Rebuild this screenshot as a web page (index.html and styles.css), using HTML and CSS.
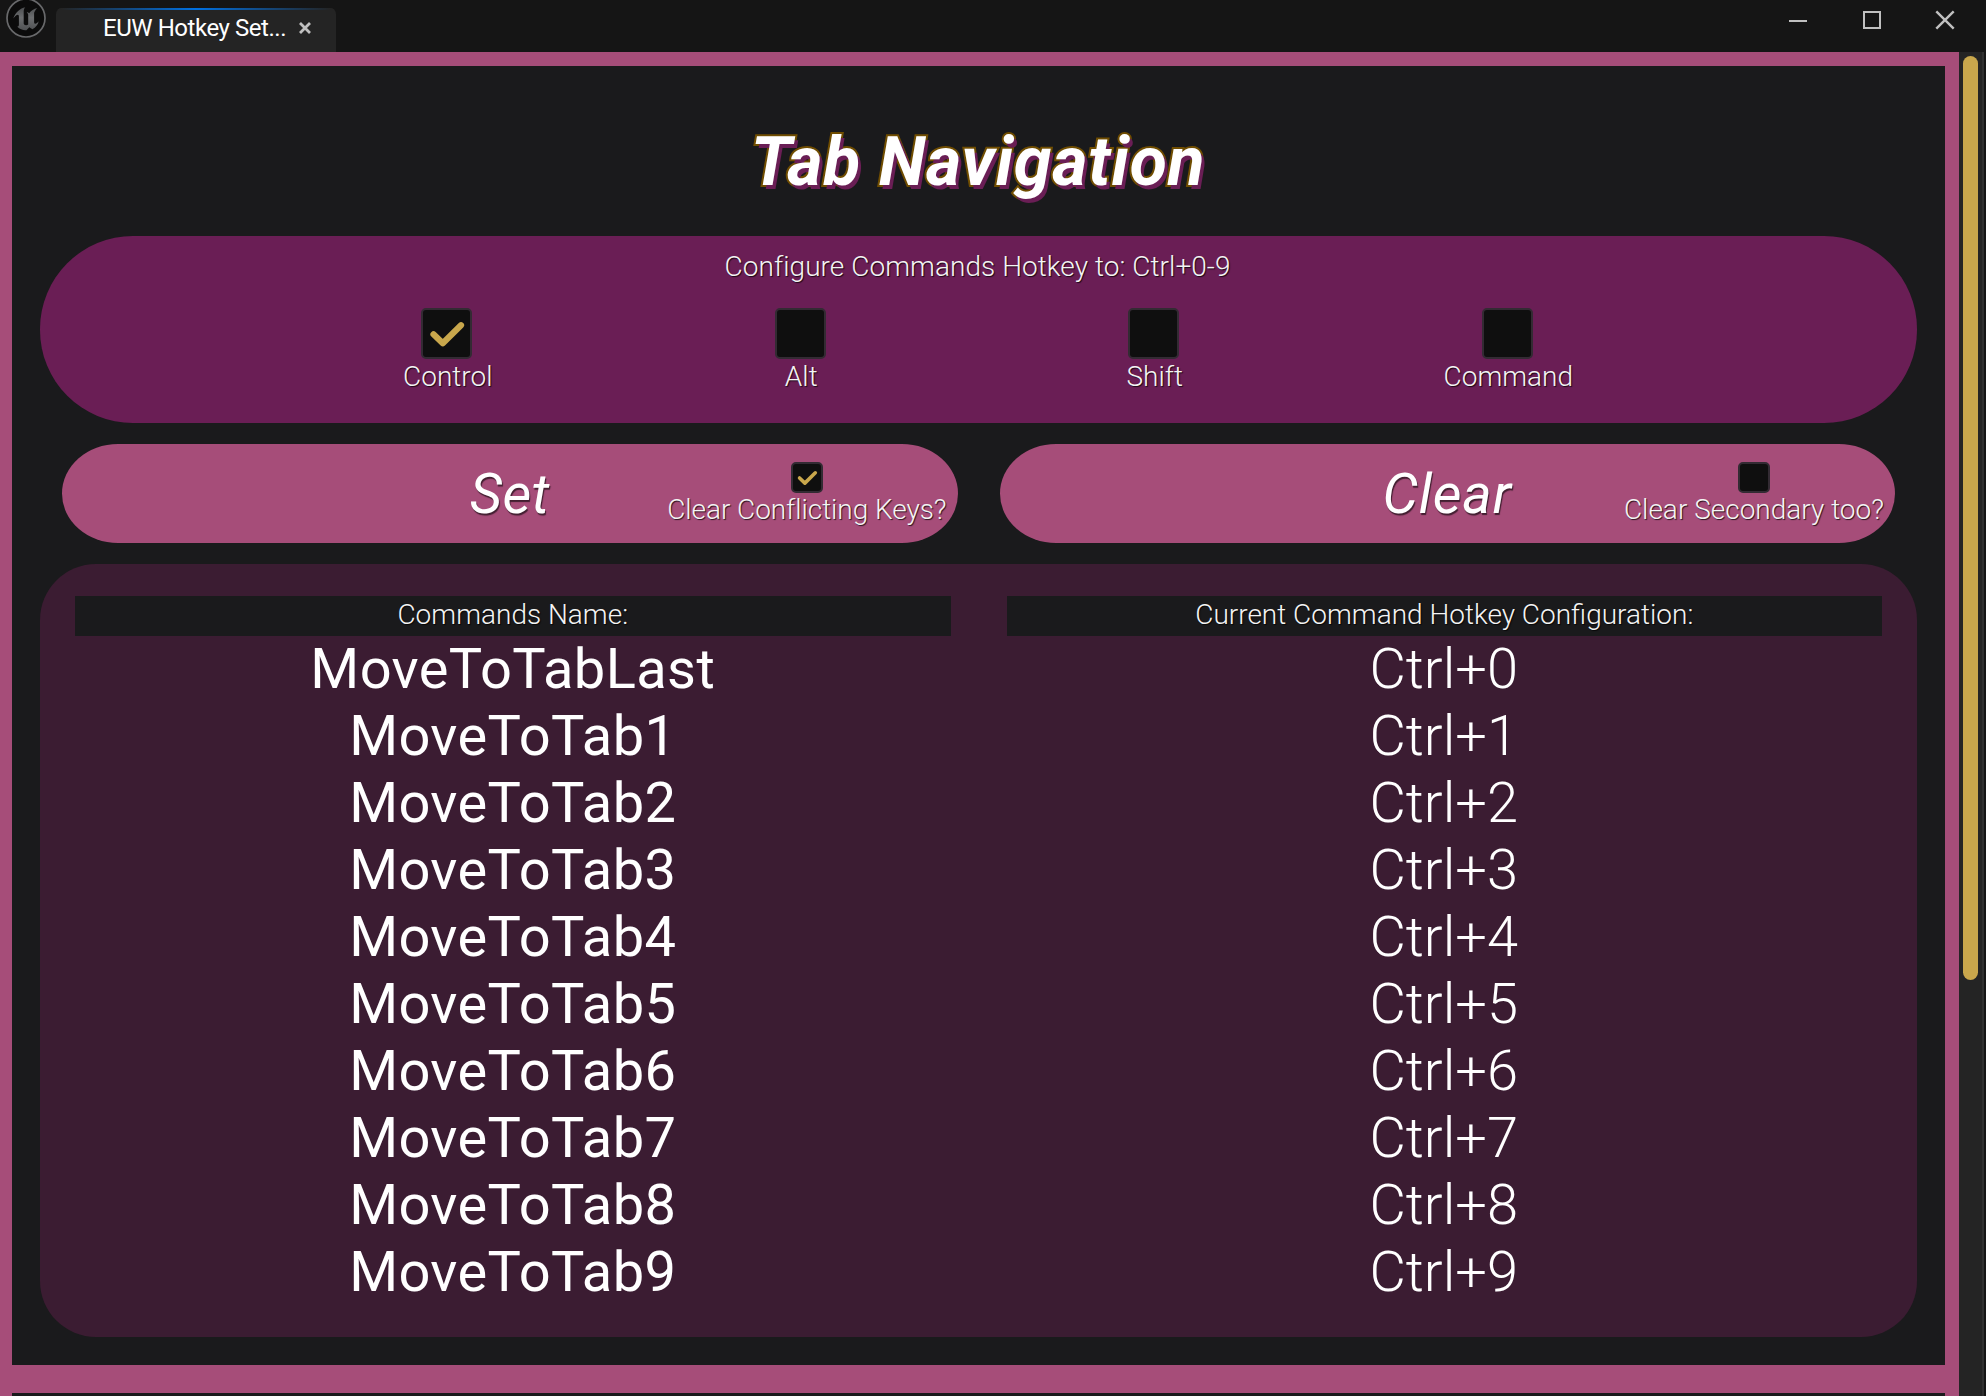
FILE: index.html
```html
<!DOCTYPE html>
<html lang="en">
<head>
<meta charset="utf-8">
<title>EUW Hotkey Settings</title>
<link rel="stylesheet" href="styles.css">
</head>
<body>
<header class="titlebar">
  <svg class="logo" viewBox="0 0 40 40">
    <defs><linearGradient id="metal" x1="0" y1="0" x2="0" y2="1"><stop offset="0" stop-color="#4c4e50"/><stop offset=".45" stop-color="#6c6e70"/><stop offset="1" stop-color="#4f5153"/></linearGradient></defs>
    <circle cx="20" cy="20" r="19" fill="#0b0b0b" stroke="#68696b" stroke-width="1.7"/>
    <path fill="url(#metal)" d="M19.3 9.3C14 10.300 9.500 14.500 7.300 20.500C9 18.500 10.800 16.600 12.200 16.900C13 17.200 12.900 18.200 12.900 19.300V26.600C12.900 28.200 12.300 28.700 11.200 28.600C13.600 31.400 17.200 32.400 20.400 32.200L23.300 29.300L26.400 31.200C29.800 29.500 32 26.500 32.700 23.200C31.400 24.700 30.100 26 29 25.700C28.300 25.500 28.100 24.900 28.100 24.100V14.800C28.800 12.900 30 11.400 31.300 10C27.800 10.700 25 12.600 23.100 15.200C22.400 14.500 21.600 14.200 20.800 14.400C22 15.300 22.200 16 22.200 17V26.400C21.300 27.400 18 28 17.700 25.600V13.500C17.700 11.700 18.400 10.300 19.300 9.300Z"/>
  </svg>
  <div class="tab"><span class="tab-label">EUW Hotkey Set...</span>
    <svg class="tab-close" viewBox="0 0 14 14"><path d="M2 2L12 12M12 2L2 12"/></svg>
  </div>
  <div class="window-buttons">
    <svg viewBox="0 0 20 20"><path d="M1 11H19"/></svg>
    <svg viewBox="0 0 20 20"><path d="M2 2H18V18H2Z"/></svg>
    <svg class="close" viewBox="0 0 20 20"><path d="M1.300 1.300L18.700 18.700M18.700 1.300L1.300 18.700"/></svg>
  </div>
</header>
<div class="body">
  <main class="content">
    <section class="page">
      <h1 class="title">Tab Navigation</h1>
      <div class="config">
        <p class="text config-text">Configure Commands Hotkey to: Ctrl+0-9</p>
        <div class="modifiers">
          <label class="modifier"><span class="box"><svg viewBox="0 0 47 47"><path d="M10.500 24.300L19.800 33.300L38 15.300"/></svg></span><span class="text">Control</span></label>
          <label class="modifier"><span class="box"></span><span class="text">Alt</span></label>
          <label class="modifier"><span class="box"></span><span class="text">Shift</span></label>
          <label class="modifier"><span class="box"></span><span class="text">Command</span></label>
        </div>
      </div>
      <div class="actions">
        <div class="action"><span class="action-name">Set</span>
          <label class="option conflict"><span class="box small"><svg viewBox="0 0 47 47"><path d="M10.500 24.300L19.800 33.300L38 15.300"/></svg></span><span class="text">Clear Conflicting Keys?</span></label></div>
        <div class="action"><span class="action-name clear">Clear</span>
          <label class="option"><span class="box small"></span><span class="text">Clear Secondary too?</span></label></div>
      </div>
      <div class="commands">
        <div class="column">
          <h2 class="column-head text">Commands Name:</h2>
          <div class="row">MoveToTabLast</div><div class="row">MoveToTab1</div><div class="row">MoveToTab2</div><div class="row">MoveToTab3</div><div class="row">MoveToTab4</div><div class="row">MoveToTab5</div><div class="row">MoveToTab6</div><div class="row">MoveToTab7</div><div class="row">MoveToTab8</div><div class="row">MoveToTab9</div>
        </div>
        <div class="column keys">
          <h2 class="column-head text">Current Command Hotkey Configuration:</h2>
          <div class="row">Ctrl+0</div><div class="row">Ctrl+1</div><div class="row">Ctrl+2</div><div class="row">Ctrl+3</div><div class="row">Ctrl+4</div><div class="row">Ctrl+5</div><div class="row">Ctrl+6</div><div class="row">Ctrl+7</div><div class="row">Ctrl+8</div><div class="row">Ctrl+9</div>
        </div>
      </div>
    </section>
    <section class="next-page"></section>
  </main>
  <div class="scrollbar"><div class="thumb"></div></div>
</div>
</body>
</html>
```
FILE: styles.css
```css
* { box-sizing: border-box; margin: 0; }
body { width: 1986px; height: 1396px; overflow: hidden; background: #151515; color: #fff; font-family: Roboto, "Liberation Sans", sans-serif; }
.titlebar { display: flex; height: 52px; background: #151515; }
.logo { width: 40px; height: 40px; margin: -2px 10px 0 6px; }
.tab { position: relative; display: flex; align-items: center; width: 280px; height: 44px; margin-top: 8px; padding: 0 24px 4px 47px; border-radius: 6px 6px 0 0; background: #242424; overflow: hidden; }
.tab::before { content: ""; position: absolute; inset: 0 0 auto; height: 2px; background: linear-gradient(90deg, #242424 2%, #0070e0 50%, #242424 98%); }
.tab-label { flex: 1; font-size: 24px; line-height: 30px; letter-spacing: -.45px; white-space: nowrap; }
.tab-close { width: 14px; height: 14px; fill: none; stroke: #c0c0c0; stroke-width: 2.8; }
.window-buttons { display: flex; gap: 53.500px; margin: 10px 31px 0 auto; }
.window-buttons svg { width: 20px; height: 20px; fill: none; stroke: #c0c0c0; stroke-width: 2; }
.window-buttons .close { stroke-width: 2.4; }
.body { display: flex; height: 1344px; }
.content { width: 1959px; padding: 14px 14px 0 12px; background: #a64d79; }
.page { height: 1299px; padding: 0 28px; background: #1a1a1c; }
.next-page { height: 3px; margin-top: 28px; background: #1a1a1c; }
.title { height: 170px; padding: 56px 1px 0 0; text-align: center; font-size: 68px; line-height: 80px; letter-spacing: .75px; font-weight: 700; font-style: italic; -webkit-text-stroke: 4px #704d00; paint-order: stroke fill; text-shadow: 3px 4px 0 #6a1e55; }
.text { font-size: 28px; line-height: 34px; font-weight: 300; white-space: nowrap; color: #f4f4f4; text-shadow: 1px 1px 1px rgba(0,0,0,.75); }
.config { height: 187px; padding-top: 14px; border-radius: 93px; background: #6a1e55; text-align: center; }
.config-text { padding-right: 2px; letter-spacing: .05px; }
.modifiers { display: grid; grid-template-columns: repeat(4, 353.500px); justify-content: center; margin: 24px 3px 0 0; }
.modifier { display: flex; flex-direction: column; align-items: center; }
.modifier .text { padding: 1px 0 0 2px; }
.box { width: 51px; height: 51px; border: 2px solid #332b33; border-radius: 5px; background: #0f0f0f; }
.box svg { display: block; width: 100%; height: 100%; fill: none; stroke: #c9a74c; stroke-width: 6.200; stroke-linecap: round; stroke-linejoin: round; }
.box.small { width: 32px; height: 31px; }
.actions { display: flex; gap: 42px; margin: 21px 22px; }
.action { display: grid; grid-template-columns: 1fr auto 1fr; flex: 1; height: 99px; padding: 0 11px; border-radius: 56px / 49.500px; background: #a64d79; }
.action-name { grid-column: 2; align-self: center; font-size: 56px; line-height: 66px; letter-spacing: .4px; font-style: italic; text-shadow: 1px 2px 1px rgba(0,0,0,.6); }
.action-name.clear { letter-spacing: .8px; }
.option { justify-self: end; display: flex; flex-direction: column; align-items: center; padding-top: 18px; }
.conflict .text { letter-spacing: -.06px; }
.commands { display: grid; grid-template-columns: 1fr 1fr; gap: 56px; height: 773px; padding: 32px 35px; border-radius: 56px; background: #3b1c32; }
.column { text-align: center; }
.column-head { height: 40px; line-height: 38px; background: #1a1a1c; }
.row { height: 67px; line-height: 66px; font-size: 56px; letter-spacing: .4px; white-space: nowrap; }
.keys .row { padding-right: 1px; font-weight: 300; letter-spacing: 0; }
.scrollbar { width: 27px; padding: 4px 0 0 4px; background: linear-gradient(90deg, #242424 23px, #303030 23px 25px, #151515 25px); }
.thumb { width: 15px; height: 924px; border-radius: 7.500px; background: #c9a74c; }
```
